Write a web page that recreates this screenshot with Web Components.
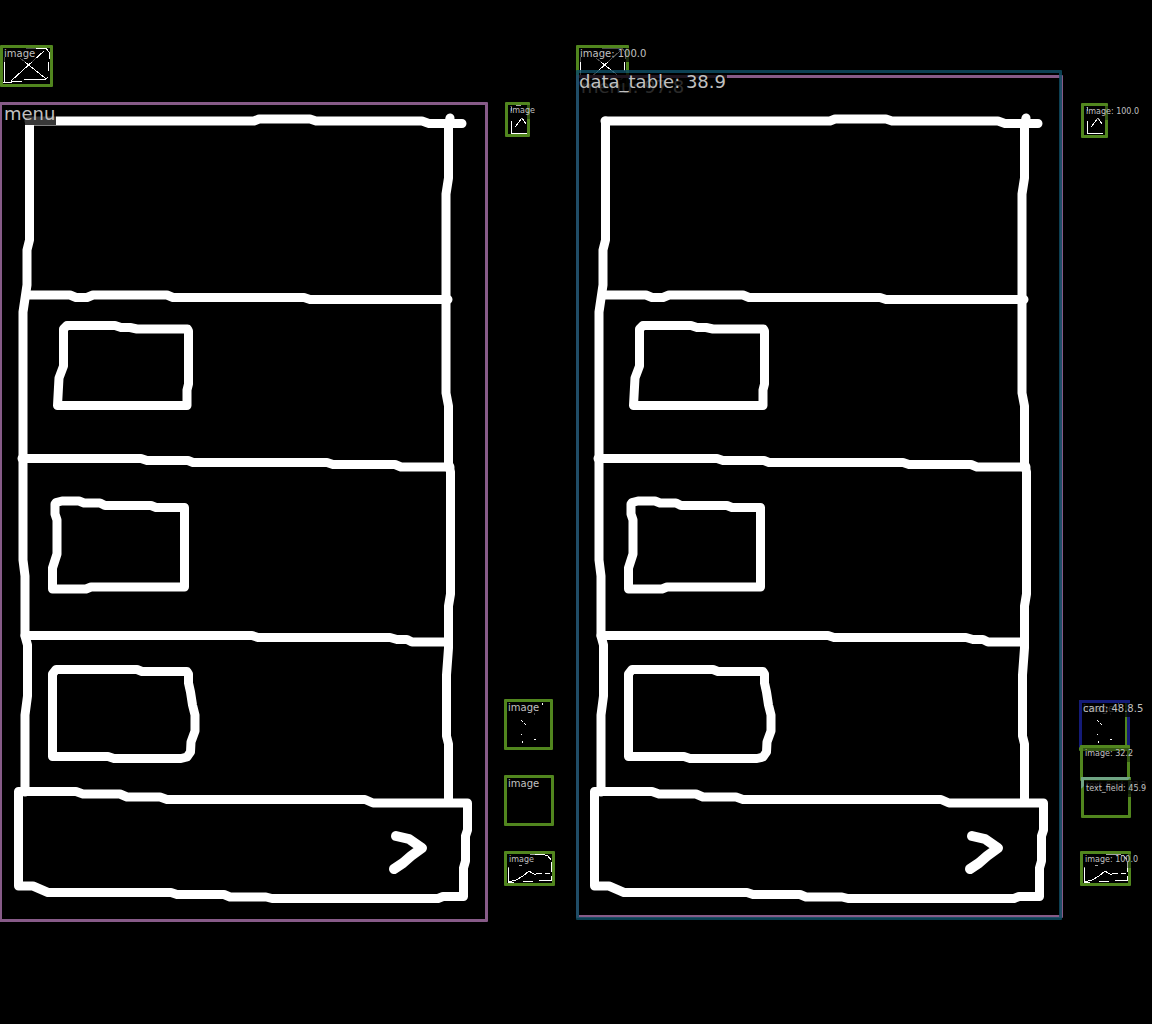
<!DOCTYPE html>
<html lang="en">
<head>
<meta charset="utf-8">
<title>Sketch element detection</title>
<style>
html { background: #000; }
body { margin: 0; font-family: "DejaVu Sans", sans-serif; color: #c0c0c0; }
</style>
</head>
<body>
<detection-compare>
  <sketch-panel>
    <box-note x="0" y="45" w="53" h="42">image</box-note>
    <box-note x="-1" y="102" w="489" h="820" size="large" tone="menu">menu</box-note>
    <box-note x="505" y="102" w="25" h="35" size="small">image</box-note>
    <box-note x="504" y="699" w="49" h="51">image</box-note>
    <box-note x="504" y="775" w="50" h="51">image</box-note>
    <box-note x="504" y="851" w="51" h="35" size="small">image</box-note>
  </sketch-panel>
  <sketch-panel>
    <box-note x="0" y="45" w="53" h="42">image: 100.0</box-note>
    <box-note x="0" y="75" w="487" h="843" size="large" tone="menu">menu: 97.8</box-note>
    <box-note x="0" y="70" w="486" h="850" size="large" tone="table">data_table: 38.9</box-note>
    <box-note x="505" y="103" w="27" h="35" size="small">image: 100.0</box-note>
    <box-note x="503" y="700" w="49" h="51">image</box-note>
    <box-note x="503" y="700" w="51" h="48" tone="card">card: 48.8.5</box-note>
    <box-note x="504" y="745" w="50" h="36" size="small">image: 32.2</box-note>
    <box-note x="505" y="777" w="50" h="41" size="small" tone="under">text_field: 33.2</box-note>
    <box-note x="505" y="777" w="50" h="12" size="small" tone="field">text_field: 45.9</box-note>
    <box-note x="504" y="851" w="51" h="35" size="small">image: 100.0</box-note>
  </sketch-panel>
</detection-compare>

<template id="compare-template">
  <style>
    :host { display: grid; grid-template-columns: 1fr 1fr; overflow: hidden; }
  </style>
  <slot></slot>
</template>

<template id="panel-template">
  <style>
    :host { display: block; position: relative; aspect-ratio: 576 / 1024; }
  </style>
  <sketch-drawing></sketch-drawing>
  <slot></slot>
</template>

<template id="note-template">
  <style>
    /* Boxes sit on the drawing in its own 576 x 1024 coordinates. */
    :host {
      position: absolute;
      box-sizing: border-box;
      left: calc(var(--x) / 576 * 100%);
      top: calc(var(--y) / 1024 * 100%);
      width: calc(var(--w) / 576 * 100%);
      height: calc(var(--h) / 1024 * 100%);
      border: 3px solid #51861e;
      border-radius: 1px;
      font-size: 10px;
      line-height: 12px;
      --veil: rgba(0, 0, 0, .7);
    }
    :host([size="small"]) { font-size: 8px; --veil: rgba(0, 0, 0, .35); }
    :host([size="large"]) { font-size: 18px; line-height: 18px; --veil: rgba(0, 0, 0, .78); }
    :host([tone="menu"]) { border-color: #875b88; }
    :host([tone="table"]) { border-color: rgba(14, 75, 98, .85); }
    :host([tone="card"]) { border-color: #141b78 #141b78 transparent #141b78; --veil: rgba(0, 0, 0, .75); }
    :host([tone="under"]) { color: #555; }
    :host([tone="field"]) { border-color: #70a584 transparent transparent #70a584; --veil: rgba(0, 0, 0, .6); }
    span {
      display: block;
      width: max-content;
      padding: 0 1px 2px;
      background: var(--veil);
      white-space: nowrap;
    }
    :host([tone="menu"]) span { padding-left: 2px; }
    :host([tone="table"]) span { padding-left: 0; }
    :host([size="small"]) span { padding-left: 2px; }
    :host([tone="field"]) span { padding-top: 3px; }
  </style>
  <span><slot></slot></span>
</template>

<template id="drawing-template">
  <style>
    :host { display: block; }
    svg { display: block; width: 100%; height: auto; }
    .marker { fill: none; stroke: #fff; stroke-width: 9; stroke-linecap: round; stroke-linejoin: round; }
    .arrow { stroke-width: 10; }
    .thin { fill: none; stroke: #fff; stroke-width: 1; shape-rendering: crispEdges; }
  </style>
  <svg viewBox="0 0 576 1024" aria-hidden="true">
    <g class="marker">
      <path d="M29 121H254L259 119H310L316 121H422L429 123.500H462"/>
      <path d="M29.500 121V240L27 250V285L23 312V560L25 576V636L27.500 645V696L25 715V792"/>
      <path d="M450 118L448.500 125V178L446 194V393L448.500 406V463L450.500 472V594L448.500 606V648L446.500 675V736L448.500 744V802"/>
      <path d="M27 295H70L76 297.500H87L93 295H167L173 297.500H304L310 299.500H448"/>
      <path d="M22 458.500H141L147 460.500H188L193 462.500H327L333 464.500H395L401 467H450"/>
      <path d="M25 635.500H252L258 637.500H390L397 639.500H407L412 642H447"/>
      <path d="M67 325.500H115L121 327.500H130L137 329H187.500L188.500 331V384L187 390V405.500H57.500L59 378L63.500 366V329Z"/>
      <path d="M56 502.500L62 501H79L84 503H100L105 505.500H151L156 507.500H184.500V587H91L86 589H52.500V568L57 554V520L55 514V504"/>
      <path d="M56 669.500H137L142 671.500H187L188.500 674V683L190.500 692L192.500 705L195 715V731L191 742L190.500 752L187 757L181 758.500H114L108 756.500H52.500V674Z"/>
      <path d="M18.500 791.500H76L83 794H120L127 797H160L167 799.500H365L373 803H467.500V830L465.500 836V861L463.500 868V896.500H443L438 898.500H272L266 897H230L224 894.500H177L171 892.500H48L33 886H18.500Z"/>
      <path class="arrow" d="M396 836L409 839L422 848L411 856L403 863L394 869"/>
    </g>
    <g class="thin">
      <path d="M11 81L44 51M20 58L45 78M4.500 57V82M2 82.500H11V81.500H22M24 79.500H45L48 77M48.500 62V71M49.500 52V59M26 48.500H46L49 52"/>
      <path d="M511.500 107V111M511.500 121V133H527M515 127L522 118L526 124M516 105.500H521M523 104.500H526"/>
      <path d="M521 720L523 722M524 723L526 725M521 734.500H522M522.500 741V743M534 739.500H536M542.500 703V705M534.500 713V715M550.500 740V741"/>
      <path d="M508.500 867V882H514M508 882L516 880L523 876L529 871L532 873L536 875M536 873.500H542M545 873.500H550M523 881.500H533M539 880.500H551M530 854.500H543L548 856L551 860M551.500 862V872M551.500 876V881M519 865.500H522"/>
    </g>
  </svg>
</template>

<script>
function fromTemplate(id) {
  return class extends HTMLElement {
    constructor() {
      super();
      this.attachShadow({ mode: "open" })
        .append(document.getElementById(id).content.cloneNode(true));
    }
  };
}

class BoxNote extends fromTemplate("note-template") {
  connectedCallback() {
    for (const name of ["x", "y", "w", "h"]) {
      this.style.setProperty("--" + name, this.getAttribute(name));
    }
  }
}

customElements.define("sketch-drawing", class extends fromTemplate("drawing-template") {});
customElements.define("box-note", BoxNote);
customElements.define("sketch-panel", class extends fromTemplate("panel-template") {});
customElements.define("detection-compare", class extends fromTemplate("compare-template") {});
</script>
</body>
</html>
